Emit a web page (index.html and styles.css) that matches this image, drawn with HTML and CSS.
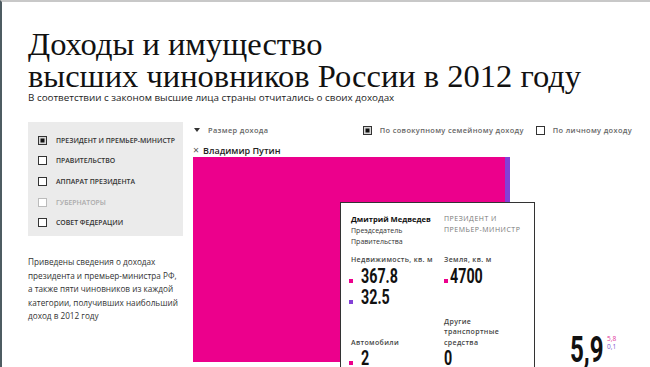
FILE: index.html
```html
<!DOCTYPE html>
<html lang="ru">
<head>
<meta charset="utf-8">
<title>Доходы и имущество высших чиновников России в 2012 году</title>
<link rel="stylesheet" href="styles.css">
</head>
<body>
<div class="page">
  <header class="head">
    <h1 class="title">Доходы и имущество<br>высших чиновников России в 2012 году</h1>
    <p class="subtitle">В соответствии с законом высшие лица страны отчитались о своих доходах</p>
  </header>
  <div class="main">
    <aside class="side">
      <ul class="filters">
        <li class="filter"><span class="box checked"></span>Президент и премьер-министр</li>
        <li class="filter"><span class="box"></span>Правительство</li>
        <li class="filter"><span class="box"></span>Аппарат президента</li>
        <li class="filter disabled"><span class="box"></span>Губернаторы</li>
        <li class="filter"><span class="box"></span>Совет Федерации</li>
      </ul>
      <p class="note">Приведены сведения о доходах<br>президента и премьер-министра РФ,<br>а также пяти чиновников из каждой<br>категории, получивших наибольший<br>доход в 2012 году</p>
    </aside>
    <section class="chart">
      <div class="controls">
        <div class="sort"><span class="tri"></span>Размер дохода</div>
        <div class="modes">
          <span class="mode"><span class="box checked"></span>По совокупному семейному доходу</span>
          <span class="mode"><span class="box"></span>По личному доходу</span>
        </div>
      </div>
      <div class="person"><span class="close">×</span>Владимир Путин</div>
      <div class="bar">
        <div class="seg own" style="width:312px"></div>
        <div class="seg other" style="width:5px"></div>
      </div>
      <div class="tip">
        <div class="cell">
          <div class="tname">Дмитрий Медведев</div>
          <div class="tpos">Преэдседатель<br>Правительства</div>
        </div>
        <div class="cell">
          <div class="tcat">Президент и<br>премьер-министр</div>
        </div>
        <div class="cell row2">
          <div class="tlabel">Недвижимость, кв. м</div>
          <div class="val"><span class="dot own"></span><span class="num">367.8</span></div>
          <div class="val"><span class="dot other"></span><span class="num">32.5</span></div>
        </div>
        <div class="cell row2">
          <div class="tlabel">Земля, кв. м</div>
          <div class="val tight"><span class="dot own"></span><span class="num">4700</span></div>
        </div>
        <div class="cell row3">
          <div class="tlabel">Автомобили</div>
          <div class="val"><span class="dot own"></span><span class="num">2</span></div>
        </div>
        <div class="cell row3">
          <div class="tlabel">Другие<br>транспортные<br>средства</div>
          <div class="val"><span class="num">0</span></div>
        </div>
      </div>
      <div class="total"><span class="bignum">5,9</span><span class="parts"><span class="p1">5,8</span><span class="p2">0,1</span></span></div>
    </section>
  </div>
</div>
</body>
</html>
```

FILE: styles.css
```css
* { box-sizing: border-box; }
html, body { margin: 0; padding: 0; background: #fff; }
.page {
  width: 650px;
  height: 367px;
  overflow: hidden;
  border-top: 2px solid #c8c8c8;
  border-left: 2px solid #4e5c62;
  padding-left: 26px;
  font-family: "Open Sans", "Liberation Sans", sans-serif;
  color: #222;
}
.head { padding-top: 26px; }
.title {
  margin: 0;
  font-family: "Liberation Serif", "Times New Roman", serif;
  font-weight: 400;
  font-size: 32.5px;
  line-height: 32px;
  color: #111;
}
.subtitle {
  margin: 0;
  font-size: 9.85px;
  line-height: 10px;
  color: #222;
}
.main {
  display: flex;
  align-items: flex-start;
  margin-top: 20px;
}
.side { width: 155px; flex: none; }
.filters {
  list-style: none;
  margin: 0;
  padding: 8px 0 0 10px;
  height: 114px;
  background: #ebebeb;
}
.filter {
  display: flex;
  align-items: center;
  height: 20.6px;
  font-size: 6.9px;
  font-weight: 600;
  text-transform: uppercase;
  color: #333;
}
.filter.disabled { color: #aaa; }
.filter.disabled .box { border-color: #bbb; }
.filter .box { margin-right: 9px; }
.box {
  display: inline-block;
  flex: none;
  width: 9px;
  height: 9px;
  border: 1px solid #333;
  background: #fff;
}
.box.checked {
  background: #111;
  box-shadow: inset 0 0 0 1.5px #d8d8d8;
}
.note {
  margin: 19px 0 0;
  font-size: 8.2px;
  line-height: 13.6px;
  color: #333;
}
.chart {
  position: relative;
  flex: 1;
  margin-left: 9px;
  height: 245px;
}
.controls {
  display: flex;
  align-items: center;
  height: 16px;
  padding-left: 2px;
  font-size: 7.4px;
  font-weight: 600;
  letter-spacing: 0.35px;
  color: #666;
}
.sort { display: flex; align-items: center; }
.tri {
  width: 0;
  height: 0;
  border-left: 3px solid transparent;
  border-right: 3px solid transparent;
  border-top: 4px solid #333;
  margin-right: 8px;
}
.modes {
  margin-left: auto;
  padding-right: 18px;
  display: flex;
  align-items: center;
  gap: 12px;
}
.mode { display: flex; align-items: center; }
.mode .box { margin-right: 8px; }
.person {
  padding-top: 5px;
  height: 19px;
  line-height: 14px;
  padding-left: 1px;
  font-size: 9px;
  font-weight: 600;
  color: #222;
}
.close { color: #555; font-weight: 400; font-size: 10.5px; margin-right: 4px; }
.bar {
  display: flex;
  height: 205px;
  margin-left: 1px;
}
.seg { height: 100%; }
.own { background: #ec008c; }
.other { background: #8340d6; }
.tip {
  position: absolute;
  left: 148px;
  top: 80px;
  width: 195px;
  height: 190px;
  background: #fff;
  border: 1px solid #333;
  padding: 11px 0 0 10px;
  display: grid;
  grid-template-columns: 93px 1fr;
  align-content: start;
}
.cell { font-size: 7px; line-height: 11px; }
.tname { font-weight: 700; font-size: 7.6px; color: #111; }
.tpos { color: #333; }
.tcat { color: #777; text-transform: uppercase; letter-spacing: 0.5px; line-height: 10.5px; }
.row2 { margin-top: 8px; }
.row3 { margin-top: 9px; align-self: end; }
.tlabel { font-weight: 600; letter-spacing: 0.35px; color: #444; line-height: 10.5px; }
.val {
  display: flex;
  align-items: baseline;
  height: 21px;
  line-height: 21px;
}
.dot {
  width: 4px;
  height: 4px;
  flex: none;
  margin-right: 8px;
  margin-left: -2px;
  align-self: flex-end;
  margin-bottom: 4px;
}
.val.tight .dot { margin-right: 2px; margin-left: 0; }
.num {
  display: inline-block;
  font-family: Roboto, "Liberation Sans", sans-serif;
  font-weight: 700;
  font-size: 21px;
  color: #111;
  transform: scaleX(0.68);
  transform-origin: left center;
}
.total {
  position: absolute;
  left: 378px;
  top: 213px;
  height: 30px;
}
.bignum {
  display: inline-block;
  font-family: Roboto, "Liberation Sans", sans-serif;
  font-weight: 700;
  font-size: 36px;
  line-height: 30px;
  color: #111;
  transform: scaleX(0.67);
  transform-origin: left center;
}
.parts {
  position: absolute;
  left: 37px;
  top: 0;
  display: flex;
  flex-direction: column;
  font-size: 6.5px;
  line-height: 8px;
}
.p1 { color: #e0359a; }
.p2 { color: #7a55cf; }
```
